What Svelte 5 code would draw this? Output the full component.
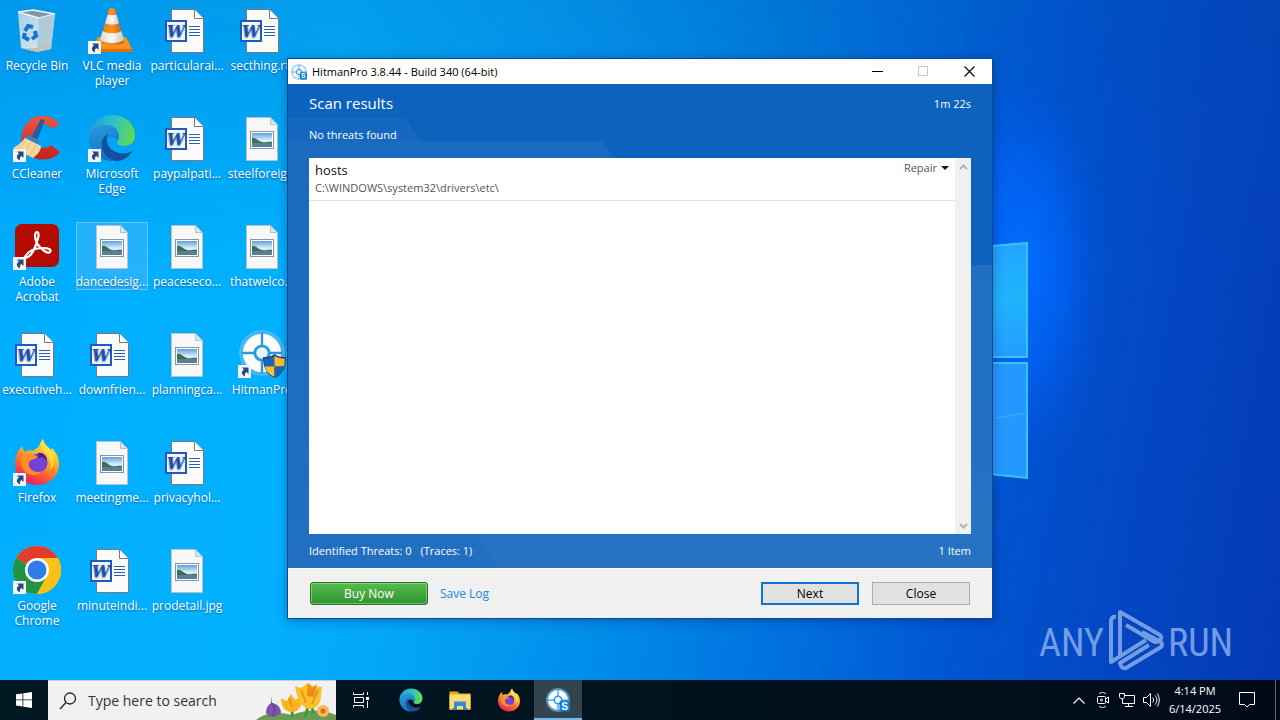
<script lang="ts">
	type Shortcut = { icon: string; label: string; link?: boolean; selected?: boolean };

	const shortcuts: Shortcut[] = [
		{ icon: 'bin', label: 'Recycle Bin' },
		{ icon: 'ccleaner', label: 'CCleaner', link: true },
		{ icon: 'acrobat', label: 'Adobe\nAcrobat', link: true },
		{ icon: 'word', label: 'executiveh...' },
		{ icon: 'firefox', label: 'Firefox', link: true },
		{ icon: 'chrome', label: 'Google\nChrome', link: true },
		{ icon: 'vlc', label: 'VLC media\nplayer', link: true },
		{ icon: 'edge', label: 'Microsoft\nEdge', link: true },
		{ icon: 'image', label: 'dancedesig...', selected: true },
		{ icon: 'word', label: 'downfrien...' },
		{ icon: 'image', label: 'meetingme...' },
		{ icon: 'word', label: 'minuteindi...' },
		{ icon: 'word', label: 'particularai...' },
		{ icon: 'word', label: 'paypalpati...' },
		{ icon: 'image', label: 'peaceseco...' },
		{ icon: 'image', label: 'planningca...' },
		{ icon: 'word', label: 'privacyhol...' },
		{ icon: 'image', label: 'prodetail.jpg' },
		{ icon: 'word', label: 'secthing.rtf' },
		{ icon: 'image', label: 'steelforeig...' },
		{ icon: 'image', label: 'thatwelco...' },
		{ icon: 'hitman-admin', label: 'HitmanPro', link: true }
	];

	const pinned = [
		{ icon: 'edge', name: 'Microsoft Edge' },
		{ icon: 'explorer', name: 'File Explorer' },
		{ icon: 'firefox', name: 'Firefox' },
		{ icon: 'hitman', name: 'HitmanPro', active: true }
	];

	const results = [{ name: 'hosts', path: 'C:\\WINDOWS\\system32\\drivers\\etc\\' }];

	let search = $state('');
</script>

{#snippet icon(name: string, size: number)}
	<svg width={size} height={size} viewBox="0 0 48 48" aria-hidden="true">
		<use href="#i-{name}" />
		{#if name === 'word'}
			<text class="word-mark" x="13" y="31">W</text>
		{:else if name === 'hitman'}
			<text class="hitman-mark" x="37" y="43">S</text>
		{/if}
	</svg>
{/snippet}

<svg class="sprite" width="0" height="0" aria-hidden="true">
	<defs>
		<linearGradient id="g-fox" x1="0.8" y1="0" x2="0.3" y2="1">
			<stop offset="0" stop-color="#fff44f" />
			<stop offset="0.35" stop-color="#ffb82a" />
			<stop offset="0.65" stop-color="#ff6b2c" />
			<stop offset="1" stop-color="#ed1164" />
		</linearGradient>
		<linearGradient id="g-edge-top" x1="0" y1="0.3" x2="1" y2="0.5">
			<stop offset="0" stop-color="#1f9ddd" />
			<stop offset="0.5" stop-color="#2bc4c4" />
			<stop offset="1" stop-color="#62db4f" />
		</linearGradient>
		<linearGradient id="g-edge-left" x1="0" y1="0" x2="0.3" y2="1">
			<stop offset="0" stop-color="#2a9be0" />
			<stop offset="1" stop-color="#1272c6" />
		</linearGradient>
		<linearGradient id="g-cc" x1="0" y1="0" x2="0" y2="1">
			<stop offset="0" stop-color="#ef5540" />
			<stop offset="1" stop-color="#c4201c" />
		</linearGradient>
		<linearGradient id="g-sky" x1="0" y1="0" x2="0" y2="1">
			<stop offset="0" stop-color="#5e9fe0" />
			<stop offset="0.5" stop-color="#d8edf8" />
		</linearGradient>
		<linearGradient id="g-bin" x1="0" y1="0" x2="1" y2="1">
			<stop offset="0" stop-color="#a4d0ea" />
			<stop offset="1" stop-color="#e4e9ec" />
		</linearGradient>
		<linearGradient id="g-cone" x1="0" y1="0" x2="1" y2="0">
			<stop offset="0" stop-color="#e87c0c" />
			<stop offset="0.5" stop-color="#fb8f1a" />
			<stop offset="1" stop-color="#cc5c00" />
		</linearGradient>
		<linearGradient id="g-band" x1="0" y1="0" x2="1" y2="0">
			<stop offset="0" stop-color="#d8d8d4" />
			<stop offset="0.5" stop-color="#fafaf8" />
			<stop offset="1" stop-color="#c4c4c0" />
		</linearGradient>
		<radialGradient id="g-hit">
			<stop offset="0" stop-color="#1f8fdc" />
			<stop offset="0.75" stop-color="#3ba9ec" />
			<stop offset="1" stop-color="#7cc4f4" stop-opacity="0.5" />
		</radialGradient>
	</defs>

	<symbol id="i-bin" viewBox="0 0 48 48">
		<path d="M5 6 20 4l22 4-4 35-14 3-16-4z" fill="url(#g-bin)" />
		<path d="M5 6 20 4l22 4-16 4z" fill="#7c98a8" />
		<path d="M5 6 20 4l22 4-16 4z" fill="none" stroke="#eef6fa" stroke-width="1.4" />
		<path d="M26 12 42 8l-4 35-14 3z" fill="#a9c4d4" opacity="0.8" />
		<path d="M8 42l16 4 14-4-3-3-12 3z" fill="#c8c0b8" />
		<g fill="none" stroke="#1478d0" stroke-width="4">
			<path d="M12 25l3-5 5 1" />
			<path d="M22 25l1 5-4 3" />
			<path d="M16 34l-5-3 1-4" />
		</g>
	</symbol>

	<symbol id="i-vlc" viewBox="0 0 48 48">
		<path d="M10 31h28l7 15H3z" fill="#e06c04" />
		<path d="M10 31h28l6 12H4z" fill="#f99220" />
		<path d="M21 3q3-2 6 0l9 33c-3 4-21 4-24 0z" fill="url(#g-cone)" />
		<path d="M19.500 9h9l2.500 8c-3 2-11 2-14 0z" fill="url(#g-band)" />
		<path d="M14.500 25c5 3 14 3 19 0l2.500 9c-5 4-19 4-24 0z" fill="url(#g-band)" />
	</symbol>

	<symbol id="i-ccleaner" viewBox="0 0 48 48">
		<path d="M47 11C40 0 23-2 14 9S7 36 17 42s24 4 30-4l-9-7c-4 4-12 4-15-1s-3-13 1-17 11-3 14 1z" fill="url(#g-cc)" />
		<path d="M28 5l4 1-9 23-6-3z" fill="#245f9c" />
		<path d="M14 20l13 7-3 5-13-7z" fill="#3f80bc" />
		<path d="M12 24l16 8c0 5-4 9-8 12L0 34c4-2 8-5 12-10z" fill="#f7d79c" />
		<path d="M12 27L5 35m12-6l-6 10m12-8l-6 11" stroke="#e2b878" fill="none" />
	</symbol>

	<symbol id="i-acrobat" viewBox="0 0 48 48">
		<rect x="2" y="2" width="44" height="43" rx="7" fill="#b30b00" />
		<path d="M12 35c3-6 10-9 18-9 6 0 9 2 7 4-3 3-15-7-15-16 0-6 5-5 3 2-2 8-6 17-10 19-2 1-4 1-3 0z" fill="none" stroke="#fff" stroke-width="2.200" />
	</symbol>

	<symbol id="i-word" viewBox="0 0 48 48">
		<path d="M8.500 3.500h23l9 9v34h-32z" fill="#fbfbfb" stroke="#77797c" />
		<path d="M31.500 3.500v9h9" fill="#fff" stroke="#77797c" />
		<path d="M26 20.500h11m-11 3h11m-11 3h11m-11 3h11" stroke="#2b62ac" stroke-width="1" />
		<rect x="2" y="14" width="22" height="22" fill="#1e5bbf" />
		<rect x="4" y="16" width="18" height="18" fill="#f4f7fc" />
	</symbol>

	<symbol id="i-image" viewBox="0 0 48 48">
		<path d="M8.500 3.500h24l7 7v36h-31z" fill="#f7f7f7" stroke="#b9c0c6" />
		<path d="M32.500 3.500v7h7z" fill="#d4e6f2" stroke="#b9c0c6" />
		<rect x="12.500" y="17.500" width="23" height="17" fill="#fff" stroke="#8495a3" />
		<rect x="14" y="19" width="20" height="14" fill="url(#g-sky)" />
		<path d="M14 24c4-1 6 3 10 4s7-1 10 0v1H14z" fill="#3e6e54" />
		<path d="M14 29h20v4H14z" fill="#587f99" />
	</symbol>

	<symbol id="i-edge" viewBox="0 0 48 48">
		<path d="M24 1c13 0 23 9 23 20 0 7-5 11-11 11-5 0-7-2-7-4 0-1 2-2 2-5 0-5-6-9-13-9C9 14 3 19 1 26 0 12 10 1 24 1z" fill="url(#g-edge-top)" />
		<path d="M1 24c0-8 8-13 17-13 8 0 13 5 13 11 0 2-1 4-2 5-2-5-9-6-12 0-4 8 0 17 9 20C12 48 1 38 1 24z" fill="url(#g-edge-left)" />
		<path d="M20 20c-10 5-8 20 4 26 8 3 17-2 20-9-7 4-17 3-22-3-4-5-4-10-2-14z" fill="#154f9e" />
	</symbol>

	<symbol id="i-firefox" viewBox="0 0 48 48">
		<path d="M9 8c1 3 2 5 3 6 2-2 5-2 8-1l4-3c3-1 2-5 6-9 1 5 5 8 8 11l1-2c4 4 7 9 7 16 0 12-10 21-22 21S2 38 2 26C2 18 5 13 9 8z" fill="url(#g-fox)" />
		<circle cx="25" cy="25" r="9.500" fill="#7542d8" />
		<path d="M25 15c6-1 10 4 9 10 0-4-5-7-9-5z" fill="#4c1d95" />
		<path d="M8 19c4-4 12-3 17 0-2 2-7 2-9 5-2 7 6 12 13 9-6 7-17 4-20-4-1-4-2-7-1-10z" fill="#ff8e2b" />
		<path d="M30 1c1 5 5 8 8 11 4 5 5 14-1 20 3-9-1-14-6-18-3-4-4-8-1-13z" fill="#ffdf3f" />
	</symbol>

	<symbol id="i-chrome" viewBox="0 0 48 48">
		<circle cx="24" cy="24" r="24" fill="#fbc116" />
		<path d="M24 24L3.200 12A24 24 0 0 1 44.800 12z" fill="#e33b2e" />
		<path d="M3.200 12A24 24 0 0 0 24 48l10-18-10-6z" fill="#229342" />
		<path d="M24 12h20.800A24 24 0 0 1 24 48l10-18z" fill="#fbc116" />
		<circle cx="24" cy="24" r="12" fill="#fff" />
		<circle cx="24" cy="24" r="9.500" fill="#2e7de9" />
	</symbol>

	<symbol id="i-hitman-disc" viewBox="0 0 48 48">
		<circle cx="24" cy="24" r="24" fill="url(#g-hit)" />
		<circle cx="24" cy="24" r="14.500" fill="none" stroke="#fff" stroke-width="11" />
		<path d="M24 3v14m0 14v14M3 24h14m14 0h14" stroke="#2b95de" stroke-width="2.500" />
		<circle cx="24" cy="24" r="6" fill="#e8f5ff" />
	</symbol>

	<symbol id="i-hitman" viewBox="0 0 48 48">
		<use href="#i-hitman-disc" width="48" height="48" />
		<rect x="27" y="25" width="21" height="22" rx="4" fill="#1080d0" />
	</symbol>

	<symbol id="i-hitman-admin" viewBox="0 0 48 48">
		<use href="#i-hitman-disc" x="1" y="0" width="46" height="46" />
		<path d="M36.500 24c4 3 8 3 11.500 3 0 11-4 18-11.500 21C29 45 25 38 25 27c3.500 0 7.500 0 11.500-3z" fill="#24466e" />
		<path d="M36.500 26v10.500H26.800c-.4-2.500-.6-5-.6-8 3.800 0 6.500-.5 10.300-2.500z" fill="#1768b8" />
		<path d="M36.500 26c3.800 2 6.500 2.500 10.300 2.500 0 3-.2 5.500-.6 8h-9.700z" fill="#ffc02e" />
		<path d="M36.500 36.500V47c-5.500-2.500-8.700-6-9.700-10.500z" fill="#ffc02e" />
		<path d="M36.500 36.500h9.700c-1 4.500-4.200 8-9.700 10.500z" fill="#1768b8" />
	</symbol>

	<symbol id="i-explorer" viewBox="0 0 48 48">
		<path d="M3 7h16l4 4h22v32H3z" fill="#e9a61e" />
		<path d="M3 13h42v30H3z" fill="#ffdc70" />
		<path d="M12 43V27h24v16h-6v-7H18v7z" fill="#2f8ddb" />
		<path d="M9 40h6v3H9zm24 0h6v3h-6z" fill="#2374bd" />
	</symbol>
</svg>

<div class="screen">
	<main class="desktop">
		<svg class="wallpaper" viewBox="0 0 1280 680" preserveAspectRatio="xMaxYMid slice" aria-hidden="true">
			<defs>
				<radialGradient id="g-glow">
					<stop offset="0" stop-color="#0070ff" stop-opacity="1" />
					<stop offset="0.5" stop-color="#0066ff" stop-opacity="0.6" />
					<stop offset="1" stop-color="#0050e0" stop-opacity="0" />
				</radialGradient>
				<linearGradient id="g-pane" x1="0" y1="0" x2="0" y2="1">
					<stop offset="0" stop-color="#24a4ff" />
					<stop offset="0.5" stop-color="#1fb4fc" />
					<stop offset="1" stop-color="#259cff" />
				</linearGradient>
			</defs>
			<path d="M180 0L800 240 620 0z" fill="#fff" opacity="0.012" />
			<path d="M0 540L760 400 500 680H0z" fill="#fff" opacity="0.010" />
			<ellipse cx="1020" cy="270" rx="90" ry="210" fill="url(#g-glow)" />
			<path d="M860 258l168-16v115H860z" fill="url(#g-pane)" />
			<path d="M860 363h168v115l-168-16z" fill="#2598ff" />
			<path d="M980 420l48-7" stroke="#3fb0ff" />
			<path d="M980 247l47-4v114h-47m0 6h47v115l-47-5" fill="none" stroke="#36c4ff" stroke-width="2" />
		</svg>

		<div class="shortcuts">
			{#each shortcuts as item}
				<button class="shortcut" class:selected={item.selected}>
					<span class="art">
						{@render icon(item.icon, 48)}
						{#if item.link}
							<svg class="arrow" width="13" height="13" viewBox="0 0 13 13" aria-hidden="true">
								<rect width="13" height="13" fill="#f4f6f8" />
								<path d="M4 2.500h6.500V9L8.500 7C7 8 6.500 9 7 11.500 3 9.500 3 6.500 6 4.500z" fill="#25487e" />
							</svg>
						{/if}
					</span>
					<span class="caption">{item.label}</span>
				</button>
			{/each}
		</div>

		<svg class="watermark" width="194" height="64" viewBox="0 0 194 64" role="img" aria-label="ANY RUN">
			<g fill="#8fb2ee" font-size="38">
				<text x="1" y="48">ANY</text>
				<text x="130" y="48">RUN</text>
			</g>
			<g fill="none" stroke="#8fb2ee" stroke-width="4" stroke-linejoin="round">
				<path d="M78 9q-5-1-5 5v40l35-22" />
				<path d="M82 49V4l40 23q3 3-1 6-3 2-6 0L88 17" />
				<path d="M104 24l19 10q2 3 0 5L88 60q-5 1-6-5l29-18" />
			</g>
		</svg>

		<section class="window" aria-label="HitmanPro">
			<header class="titlebar">
				{@render icon('hitman', 16)}
				<h1>HitmanPro 3.8.44 - Build 340 (64-bit)</h1>
				<button aria-label="Minimize">
					<svg width="11" height="11"><path d="M0 5.500h11" stroke="#000" /></svg>
				</button>
				<button aria-label="Maximize" disabled>
					<svg width="11" height="11"><path d="M.5.5h9v9h-9z" fill="none" stroke="#c4c4c4" /></svg>
				</button>
				<button aria-label="Close window">
					<svg width="11" height="11"><path d="M.5.5l10 10m0-10l-10 10" stroke="#000" stroke-width="1.100" /></svg>
				</button>
			</header>

			<div class="scan">
				<svg class="facets" viewBox="0 0 704 484" preserveAspectRatio="none" aria-hidden="true">
					<path d="M0 34h117l15 23H0z" fill="#fff" opacity="0.04" />
					<path d="M0 57h314l12 17v376H187l22 34H0z" fill="#fff" opacity="0.06" />
					<path d="M560 181h144v303H209l-22-34h373z" fill="#fff" opacity="0.08" />
				</svg>
				<div class="row">
					<h2>Scan results</h2>
					<span>1m 22s</span>
				</div>
				<p class="status">No threats found</p>
				<div class="list">
					<ul>
						{#each results as result}
							<li>
								<div>
									<strong>{result.name}</strong>
									<small>{result.path}</small>
								</div>
								<label class="action">
									<select aria-label="Action for {result.name}">
										<option>Repair</option>
									</select>
									<svg width="8" height="4"><path d="M0 0h8L4 4z" fill="#111" /></svg>
								</label>
							</li>
						{/each}
					</ul>
					<div class="scrollbar">
						<button aria-label="Scroll up">
							<svg width="9" height="6"><path d="M1 5l3.500-3.500L8 5" fill="none" stroke="#b4b4b4" stroke-width="2" /></svg>
						</button>
						<button aria-label="Scroll down">
							<svg width="9" height="6"><path d="M1 1l3.500 3.500L8 1" fill="none" stroke="#b4b4b4" stroke-width="2" /></svg>
						</button>
					</div>
				</div>
				<div class="row totals">
					<span class="counts"><span>Identified Threats: 0</span><span>(Traces: 1)</span></span>
					<span>1 Item</span>
				</div>
			</div>

			<footer>
				<button class="buy">Buy Now</button>
				<a href="#log">Save Log</a>
				<div class="pushes">
					<button class="push primary">Next</button>
					<button class="push">Close</button>
				</div>
			</footer>
		</section>
	</main>

	<nav class="taskbar">
		<button class="start" aria-label="Start">
			<svg width="16" height="16" viewBox="0 0 16 16" fill="#fff">
				<path d="M0 2.300L6.500 1.400v6.100H0zM7.300 1.300L16 0v7.500H7.300zM0 8.300h6.500v6.200L0 13.600zM7.300 8.300H16V16l-8.700-1.300z" />
			</svg>
		</button>
		<label class="search">
			<svg width="18" height="18" viewBox="0 0 18 18" fill="none" stroke="#222" stroke-width="1.300">
				<circle cx="11" cy="6.500" r="5.500" />
				<path d="M7 10.500L1 17" />
			</svg>
			<input type="text" placeholder="Type here to search" aria-label="Type here to search" bind:value={search} />
			<svg class="flowers" width="80" height="39" viewBox="0 0 80 39" aria-hidden="true">
				<path d="M0 39c8-7 22-9 36-5 14-6 30-6 44 0v5z" fill="#6b9a52" />
				<path d="M37 18l-1 18M55 16l-6 20M55 18l2 14" stroke="#3f9a3c" stroke-width="3" />
				<path d="M15 15l1 7c6 1 9 5 9 10-5 5-12 5-15 0 0-5 2-8 5-10z" fill="#7b56a8" />
				<path d="M16 22c3 3 3 8 1 13" stroke="#53357e" fill="none" />
				<path d="M25 17l6 3 4-7 4 6 7-4c1 9-3 16-10 16s-11-6-11-14z" fill="#f9b521" />
				<path d="M39 5l6 2 7-5 5 3 9 1-1 8c0 9-5 14-11 14S41 21 39 5z" fill="#fcc129" />
				<path d="M52 2l4 5 5-4-3 13-7-1z" fill="#ef8c1a" />
				<path d="M33 17l3 9m9-17l5 13m12-13l-6 14" stroke="#e8961b" stroke-width="2" />
				<circle cx="67" cy="30" r="6" fill="#f9b95a" />
				<circle cx="67" cy="30" r="2.500" fill="#e0641e" />
			</svg>
		</label>
		<button class="view" aria-label="Task View">
			<svg width="17" height="16" viewBox="0 0 17 16" fill="none" stroke="#fff">
				<path d="M.5.5v2h10v-2M.5 15.500v-2h10v2M1.500 5.500h9v5h-9zM14.500 0v3m0 6v7" />
				<path d="M13 5h3v3h-3z" fill="#fff" stroke="none" />
			</svg>
		</button>
		{#each pinned as app}
			<button class="app" class:active={app.active} aria-label={app.name}>{@render icon(app.icon, 24)}</button>
		{/each}

		<div class="tray">
			<button aria-label="Show hidden icons">
				<svg width="12" height="7"><path d="M.5 6.500L6 1l5.500 5.500" fill="none" stroke="#fff" stroke-width="1.200" /></svg>
			</button>
			<button aria-label="Camera">
				<svg width="14" height="16" fill="none" stroke="#fff">
					<path d="M3 2C5 0 8 0 10 2M3 14c2 2 5 2 7 0" />
					<rect x="1.500" y="4.500" width="8" height="7" rx="1" />
					<path d="M9.500 7l3-2v6l-3-2" />
					<circle cx="5.500" cy="8" r="1" />
				</svg>
			</button>
			<button aria-label="Network">
				<svg width="17" height="15" fill="none" stroke="#fff">
					<path d="M5.500 2.500h10v8H3.500V6M9.500 10.500v3M6 13.500h8" />
					<path d="M.5.500h5v3c0 3-5 3-5 0z" />
				</svg>
			</button>
			<button aria-label="Volume">
				<svg width="17" height="14" fill="none" stroke="#fff">
					<path d="M.5 4.500h3l4-4v13l-4-4h-3zM9.500 4.500c1.500 1.500 1.500 3.500 0 5M12 2.500c2.500 2.500 2.500 6.500 0 9M14 .5c3 3.500 3 9.500 0 13" />
				</svg>
			</button>
			<button class="clock"><span>4:14 PM</span><span>6/14/2025</span></button>
			<button class="notes" aria-label="Notifications">
				<svg width="16" height="16"><path d="M.5.500h15v12h-5L8 15l-2.500-2.500h-5z" fill="none" stroke="#fff" /></svg>
			</button>
			<button class="peek" aria-label="Show desktop"></button>
		</div>
	</nav>
</div>

<style>
	:global(body) {
		margin: 0;
	}

	.screen {
		display: flex;
		flex-direction: column;
		height: 100vh;
		overflow: hidden;
		font: 12px/15px 'Open Sans', 'Noto Sans', sans-serif;
	}

	button {
		border: 0;
		padding: 0;
		background: none;
		color: inherit;
		font: inherit;
	}

	.sprite {
		position: absolute;
	}

	.word-mark {
		fill: #1c50b0;
		font: italic 700 16px 'DejaVu Serif', serif;
		text-anchor: middle;
	}

	.hitman-mark {
		fill: #fff;
		font: 700 20px 'Liberation Sans', sans-serif;
		text-anchor: middle;
	}

	.desktop {
		position: relative;
		flex: 1;
		min-height: 0;
		background:
			linear-gradient(180deg, rgba(0, 70, 160, 0.2), rgba(0, 70, 160, 0) 40%),
			linear-gradient(100deg, #00acff 0%, #00b2ff 25%, #00a4f8 36%, #008eea 50%, #006cdc 66%, #0056d2 76%, #0448c4 86%, #043ab4 100%);
	}

	.wallpaper {
		position: absolute;
		width: 100%;
		height: 100%;
	}

	.shortcuts {
		position: relative;
		display: grid;
		grid-template-rows: repeat(6, 108px);
		grid-auto-flow: column;
		grid-auto-columns: 72px;
		column-gap: 3px;
		align-items: start;
		padding: 6px 1px;
	}

	.shortcut {
		display: flex;
		flex-direction: column;
		align-items: center;
		gap: 4px;
		padding-bottom: 1px;
		color: #fff;
		text-shadow: 0 1px 2px rgba(0, 40, 90, 0.6);
	}

	.shortcut.selected {
		background: rgba(120, 190, 250, 0.3);
		outline: 1px solid rgba(150, 215, 255, 0.6);
		outline-offset: -1px;
	}

	.art {
		position: relative;
		height: 48px;
	}

	.arrow {
		position: absolute;
		left: 0;
		bottom: 0;
	}

	.caption {
		white-space: pre;
	}

	.watermark {
		position: absolute;
		right: 48px;
		bottom: 8px;
		opacity: 0.8;
		font-family: 'Liberation Sans Narrow', 'Roboto Condensed', Roboto, sans-serif;
	}

	.window {
		position: absolute;
		left: 287px;
		top: 58px;
		display: flex;
		flex-direction: column;
		width: 55vw;
		border: 1px solid #0a4a8c;
		background: #f0f0f0;
		box-shadow: 0 2px 10px rgba(0, 20, 80, 0.35);
	}

	.titlebar {
		display: flex;
		align-items: center;
		height: 25px;
		padding-left: 3px;
		background: #fff;
	}

	h1 {
		flex: 1;
		margin: 0 0 0 5px;
		font-size: 11px;
		font-weight: 400;
	}

	.titlebar button {
		display: grid;
		place-items: center;
		width: 46px;
		height: 25px;
	}

	.scan {
		position: relative;
		padding: 0 21px;
		background: linear-gradient(180deg, #0c62bc, #0c62bc 30%, #1566be);
		color: #fff;
		font-size: 11px;
	}

	.facets {
		position: absolute;
		inset: 0;
		width: 100%;
		height: 100%;
	}

	.row {
		position: relative;
		display: flex;
		align-items: center;
		justify-content: space-between;
		height: 39px;
	}

	h2 {
		margin: 0;
		font-size: 15px;
		font-weight: 400;
	}

	.status {
		position: relative;
		margin: 0;
		height: 35px;
		line-height: 24px;
	}

	.list {
		position: relative;
		display: flex;
		height: 376px;
		background: #fff;
		color: #111;
	}

	ul {
		flex: 1;
		margin: 0;
		padding: 0;
		list-style: none;
	}

	li {
		display: flex;
		justify-content: space-between;
		align-items: flex-start;
		height: 42px;
		padding: 0 6px;
		border-bottom: 1px solid #e2e2e2;
	}

	strong,
	small {
		display: block;
		font-weight: 400;
	}

	strong {
		padding-top: 3px;
		font-size: 13px;
		line-height: 18px;
	}

	small {
		font-size: 11px;
		line-height: 18px;
		color: #555;
	}

	.action {
		display: flex;
		align-items: center;
		gap: 4px;
		padding-top: 1px;
	}

	select {
		field-sizing: content;
		appearance: none;
		border: 0;
		padding: 0;
		background: none;
		color: #555;
		font: 11px/17px 'Open Sans', 'Noto Sans', sans-serif;
	}

	.scrollbar {
		display: flex;
		flex-direction: column;
		justify-content: space-between;
		width: 16px;
		background: #f0f0f0;
	}

	.scrollbar button {
		display: grid;
		place-items: center;
		height: 17px;
	}

	.totals {
		height: 32px;
		padding-bottom: 2px;
	}

	.counts {
		display: flex;
		gap: 9px;
	}

	footer {
		display: flex;
		align-items: center;
		gap: 12px;
		height: 49px;
		padding: 0 22px;
		border-top: 1px solid #fff;
	}

	footer a {
		flex: 1;
		color: #1e88e0;
		text-decoration: none;
	}

	.pushes {
		display: flex;
		gap: 13px;
	}

	.push {
		width: 98px;
		height: 23px;
		border: 1px solid #adadad;
		background: #e1e1e1;
		color: #000;
	}

	.push.primary {
		border: 2px solid #1274c8;
	}

	.buy {
		width: 118px;
		height: 23px;
		border: 1px solid #2c6e2c;
		border-radius: 3px;
		background: linear-gradient(#58bc50, #2c962c);
		box-shadow: inset 0 0 0 1px rgba(180, 230, 170, 0.5);
		color: #fff;
	}

	.taskbar {
		display: flex;
		height: 40px;
		background: linear-gradient(90deg, #001822, #00131f 50%, #020a1a);
		color: #fff;
	}

	.taskbar button {
		display: grid;
		place-items: center;
	}

	.taskbar .start {
		width: 48px;
	}

	.search {
		display: flex;
		align-items: center;
		gap: 11px;
		box-sizing: border-box;
		width: 288px;
		padding-left: 11px;
		border-top: 1px solid #c8ced2;
		background: #f1f1f1;
	}

	.search input {
		flex: 1;
		min-width: 0;
		border: 0;
		padding: 0;
		outline: 0;
		background: none;
		font: 14px/20px 'Open Sans', 'Noto Sans', sans-serif;
	}

	.search input::placeholder {
		color: #333;
		opacity: 1;
	}

	.flowers {
		flex: none;
		margin-left: -11px;
	}

	.taskbar .view {
		width: 50px;
	}

	.taskbar .app {
		box-sizing: border-box;
		width: 48px;
		margin-left: 1px;
	}

	.taskbar .app.active {
		border-bottom: 2px solid #76b9ed;
		padding-top: 2px;
		background: #33444e;
	}

	.tray {
		display: flex;
		margin-left: auto;
	}

	.tray button {
		width: 24px;
	}

	.tray .clock {
		align-content: center;
		width: 64px;
		font-size: 11px;
		line-height: 18px;
	}

	.tray .notes {
		width: 40px;
		margin-right: 8px;
	}

	.tray .peek {
		width: 5px;
		border-left: 1px solid #5a6470;
	}
</style>
